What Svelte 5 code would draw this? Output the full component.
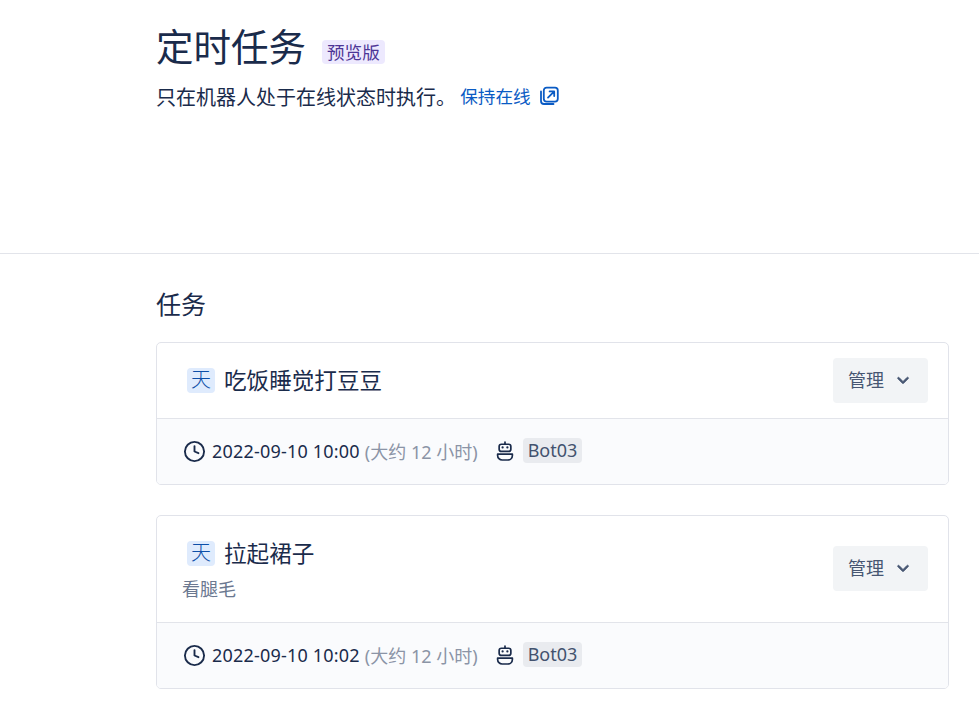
<script>
	const tasks = [
		{ title: '吃饭睡觉打豆豆', desc: '', time: '2022-09-10 10:00', bot: 'Bot03' },
		{ title: '拉起裙子', desc: '看腿毛', time: '2022-09-10 10:02', bot: 'Bot03' }
	];
</script>

<header class="page-head">
	<div class="title-row">
		<h1>定时任务</h1>
		<span class="preview">预览版</span>
	</div>
	<p class="intro">
		只在机器人处于在线状态时执行。
		<a href="#keep">保持在线
			<svg class="ext" viewBox="0 0 20 20" width="20" height="20" fill="none" stroke="currentColor" stroke-width="1.8" stroke-linecap="round" stroke-linejoin="round">
				<path d="M2 5.500v9.500a3 3 0 0 0 3 3h9.500" />
				<rect x="4.800" y="1.600" width="14" height="14" rx="2.800" />
				<path d="M9 11.600l6-6M10.600 5.400h4.600v4.600" />
			</svg>
		</a>
	</p>
</header>

<main class="content">
	<h2>任务</h2>
	{#each tasks as task}
		<section class="card">
			<div class="card-top" class:with-desc={task.desc}>
				<div class="info">
					<div class="name-row">
						<span class="freq">天</span>
						<span class="name">{task.title}</span>
					</div>
					{#if task.desc}
						<div class="desc">{task.desc}</div>
					{/if}
				</div>
				<button type="button" class="manage">
					管理
					<svg viewBox="0 0 20 20" width="18" height="18" fill="currentColor" stroke="currentColor" stroke-width="0.8">
						<path d="M4.300 7.300a1 1 0 0 1 1.400 0L10 11.600l4.300-4.300a1 1 0 1 1 1.400 1.400l-5 5a1 1 0 0 1-1.400 0l-5-5a1 1 0 0 1 0-1.400z" />
					</svg>
				</button>
			</div>
			<div class="card-foot">
				<svg class="clock" viewBox="0 0 24 24" width="25" height="25" fill="none" stroke="currentColor" stroke-width="1.8" stroke-linecap="round" stroke-linejoin="round">
					<circle cx="12" cy="12" r="9.200" />
					<path d="M12 6.800V12l3.800 1.600" />
				</svg>
				<span class="time">{task.time}</span>
				<span class="eta">(大约 12 小时)</span>
				<svg class="bot" viewBox="0 0 20 24" width="18" height="22" fill="none" stroke="currentColor" stroke-width="1.9" stroke-linecap="round" stroke-linejoin="round">
					<path d="M10 2v2.500" />
					<rect x="3.500" y="4.500" width="13" height="8" rx="2.500" />
					<path d="M7.300 8h.1M12.600 8h.1" stroke-width="2.400" />
					<path d="M1.800 15.500h16.400v1.500a5 5 0 0 1-5 5H6.800a5 5 0 0 1-5-5z" />
				</svg>
				<span class="bot-tag">{task.bot}</span>
			</div>
		</section>
	{/each}
</main>

<style>
	:global(body) {
		margin: 0;
		background: #fff;
		color: #1a2b4b;
		font-family: "Noto Sans", "Noto Sans CJK SC", sans-serif;
		overflow: hidden;
	}

	.page-head {
		height: 254px;
		box-sizing: border-box;
		padding: 22px 30px 0 156px;
		border-bottom: 1px solid #e2e4ea;
	}

	.title-row {
		display: flex;
		align-items: center;
		gap: 16px;
	}

	h1 {
		margin: 0;
		font-size: 37.500px;
		font-weight: 400;
		line-height: 50px;
		color: #1a2b4b;
	}

	.preview {
		margin-top: 9px;
		padding: 0 5px;
		border-radius: 4px;
		background: #ede9fe;
		color: #4d3596;
		font-size: 17.600px;
		line-height: 24px;
	}

	.intro {
		margin: 1px 0 0;
		font-size: 20px;
		line-height: 50px;
		height: 50px;
		color: #1a2b4b;
	}

	.intro a {
		display: inline-flex;
		align-items: center;
		gap: 8px;
		margin: -2px 0 0 -1px;
		font-size: 17.600px;
		color: #0a5bc4;
		text-decoration: none;
		vertical-align: top;
	}

	.content {
		padding: 31px 30px 0 156px;
	}

	h2 {
		margin: 0 0 19px;
		font-size: 25px;
		font-weight: 400;
		line-height: 38px;
	}

	.card {
		margin-bottom: 30px;
		border: 1px solid #e1e3ea;
		border-radius: 5px;
		overflow: hidden;
	}

	.card-top {
		display: flex;
		justify-content: space-between;
		align-items: center;
		padding: 15px 20px 15px 25px;
		border-bottom: 1px solid #e2e4ea;
	}

	.card-top.with-desc {
		padding-bottom: 17px;
	}

	.name-row {
		display: flex;
		align-items: center;
		gap: 9px;
		margin-left: 5px;
		height: 45px;
	}

	.freq {
		width: 28px;
		height: 25px;
		border-radius: 4px;
		background: #dfebfd;
		color: #0d4fa8;
		font-size: 20px;
		font-weight: 300;
		line-height: 24px;
		text-align: center;
	}

	.name {
		font-size: 22.600px;
		font-weight: 400;
		line-height: 45px;
	}

	.desc {
		margin: -2px 0 1px;
		font-size: 18px;
		line-height: 30px;
		color: #6b7890;
	}

	.manage {
		display: flex;
		align-items: center;
		gap: 10px;
		height: 45px;
		padding: 0 16px 3px 15px;
		border: 0;
		border-radius: 4px;
		background: #f2f4f6;
		color: #475672;
		font: inherit;
		font-size: 18px;
	}

	.manage svg {
		margin-top: 2px;
	}

	.card-foot {
		display: flex;
		align-items: center;
		height: 65px;
		padding: 0 0 1px 25px;
		box-sizing: border-box;
		background: #fafbfd;
		font-size: 18px;
	}

	.clock {
		margin-right: 5px;
	}

	.time {
		letter-spacing: 0.2px;
	}

	.eta {
		margin-left: 5px;
		color: #8b94a6;
	}

	.bot {
		margin-left: 18px;
		margin-right: 9px;
	}

	.bot-tag {
		margin-bottom: 1px;
		padding: 0 5px;
		border-radius: 4px;
		background: #e9ebef;
		color: #42526e;
		line-height: 25px;
	}
</style>
